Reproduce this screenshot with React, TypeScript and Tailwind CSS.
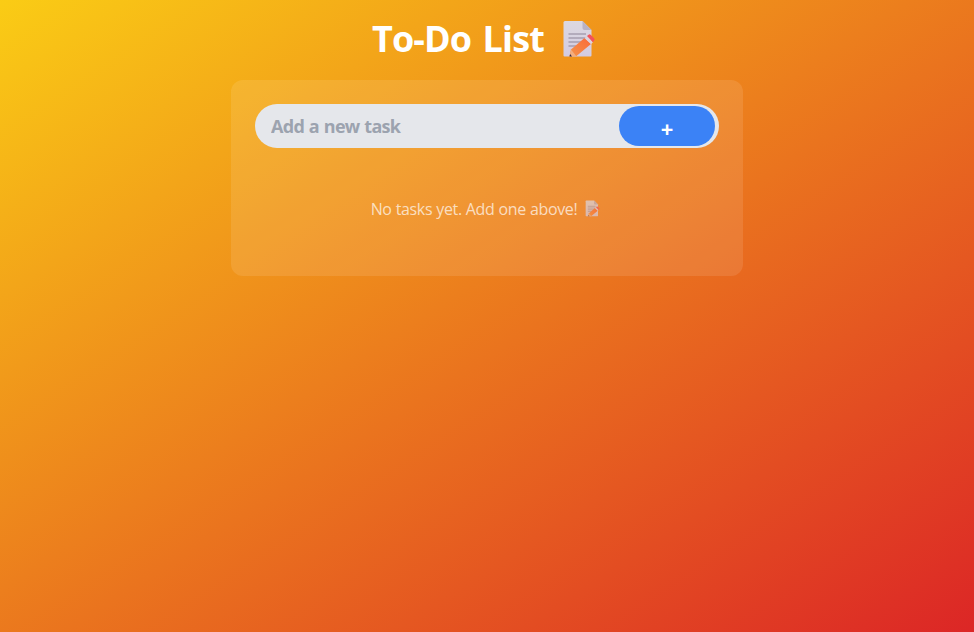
function Memo({ className }: { className: string }) {
  return (
    <svg viewBox="0 0 34 38" className={className} aria-hidden="true">
      <defs>
        <linearGradient id="page" x1="0" y1="0" x2="0" y2="1">
          <stop stopColor="#dcd8e0" />
          <stop offset="1" stopColor="#d3cbe2" />
        </linearGradient>
        <linearGradient id="pencil" x1="1" y1="0" x2="0" y2="1">
          <stop stopColor="#fa6a3c" />
          <stop offset="1" stopColor="#f59448" />
        </linearGradient>
      </defs>
      <path d="M3 1h17.500l9 9v25.500q0 1-1 1h-26q-1 0-1-1v-33q0-1.500 1.500-1.500z" fill="url(#page)" />
      <path d="M20.500 1l9 9h-7q-2 0-2-2z" fill="#b9b2c4" />
      <path d="M6.500 14h17.500M6.500 18h17.500M6.500 22h16M6.500 26h11" stroke="#8d8498" strokeWidth="1.2" />
      <path d="M7.500 36.500l1.500-7L22.500 18l6.500 6-14.500 12z" fill="url(#pencil)" />
      <path d="M7.500 36.500l1.500-7 5.500 7z" fill="#f2ae80" />
      <path d="M22.500 18l2.500-2 6 6.200-2 1.800z" fill="#dfd3dc" />
      <path d="M25 16l1.600-1.300q1.200-.8 2.300.3l3.200 3.300q1 1.200 0 2.300L31 22.200z" fill="#f4535a" />
      <path d="M7.500 36.500l.6-2.500 1.900 2.500z" fill="#33293f" />
    </svg>
  );
}

export default function App() {
  return (
    <main className="flex h-screen flex-col items-center overflow-hidden bg-[linear-gradient(to_bottom_right,#facc15,#dc2626)] pt-4 font-['Open_Sans','Noto_Sans',sans-serif]">
      <h1 className="flex h-11 items-center pl-0.5 text-4xl font-bold text-white">
        <span className="w-[172px] whitespace-nowrap pt-0.5 tracking-[-0.9px] [word-spacing:3px]">To-Do List</span>
        <Memo className="mt-0.5 mr-2 ml-[18px] h-[38px] w-[34px]" />
      </h1>
      <section className="mt-5 h-[196px] w-lg rounded-xl bg-white/10 p-6">
        <form className="flex h-11 items-center rounded-full bg-[#e5e7eb] pr-1">
          <input placeholder="Add a new task" className="min-w-0 flex-1 bg-transparent px-4 text-lg font-bold tracking-[-0.68px] [word-spacing:0.7px] placeholder:text-[#9ca3af]" />
          <button type="button" className="h-10 w-24 rounded-full bg-[#3b82f6] pt-1 text-[22px] font-bold text-white">+</button>
        </form>
        <p className="mt-12 flex items-center justify-center text-base text-white/70">
          <span className="pt-px tracking-[-0.34px] [word-spacing:0.2px]">No tasks yet. Add one above!</span>
          <Memo className="mr-[3px] ml-2 h-[17px] w-[15px] opacity-70" />
        </p>
      </section>
    </main>
  );
}
